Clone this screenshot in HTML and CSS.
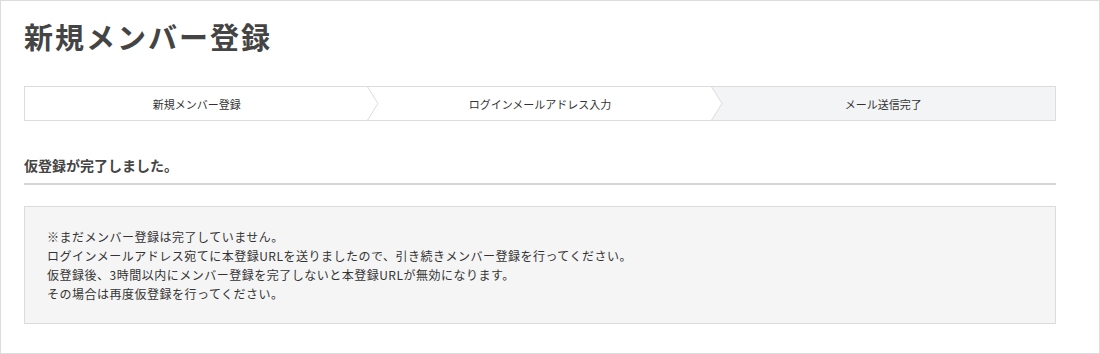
FILE: index.html
```html
<!DOCTYPE html>
<html lang="ja">
<head>
    <meta charset="UTF-8">
    <meta name="viewport" content="width=device-width, initial-scale=1.0">
    <title>新規メンバー登録</title>
    <link rel="stylesheet" href="styles.css">
</head>
<body>
    <div class="page">
        <h1 class="page-title">新規メンバー登録</h1>

        <ol class="steps">
            <li class="step">
                新規メンバー登録
                <svg class="step-arrow" width="12" height="35" viewBox="0 0 12 35">
                    <path d="M0 0 L11 17.5 L0 35" fill="#fff" stroke="#dcdcdc" stroke-width="1"/>
                </svg>
            </li>
            <li class="step">
                ログインメールアドレス入力
                <svg class="step-arrow" width="12" height="35" viewBox="0 0 12 35">
                    <path d="M0 0 L11 17.5 L0 35" fill="#fff" stroke="#dcdcdc" stroke-width="1"/>
                </svg>
            </li>
            <li class="step step-current">メール送信完了</li>
        </ol>

        <h2 class="section-title">仮登録が完了しました。</h2>

        <div class="notice">
            <p>※まだメンバー登録は完了していません。</p>
            <p>ログインメールアドレス宛てに本登録URLを送りましたので、引き続きメンバー登録を行ってください。</p>
            <p>仮登録後、3時間以内にメンバー登録を完了しないと本登録URLが無効になります。</p>
            <p>その場合は再度仮登録を行ってください。</p>
        </div>
    </div>
</body>
</html>
```

FILE: styles.css
```css
/* Reset */
* {
    margin: 0;
    padding: 0;
    box-sizing: border-box;
}

body {
    font-family: "Noto Sans CJK JP", "Noto Sans", sans-serif;
    color: #333;
    background-color: #fff;
}

/* Moldura da página */
.page {
    height: 354px;
    border: 1px solid #dcdcdc;
    padding: 15px 43px 0 23px;
}

.page-title {
    font-size: 29px;
    line-height: 40px;
    font-weight: bold;
    color: #444;
    letter-spacing: 2px;
    margin-bottom: 30px;
}

/* Etapas */
.steps {
    list-style: none;
    display: flex;
    height: 35px;
    border: 1px solid #dcdcdc;
}

.step {
    position: relative;
    flex: 1;
    display: flex;
    justify-content: center;
    align-items: center;
    font-size: 11px;
    color: #333;
    background-color: #fff;
}

.step-current {
    background-color: #f3f4f5;
}

.step-arrow {
    position: absolute;
    top: -1px;
    right: -11px;
    z-index: 1;
}

/* Título da seção */
.section-title {
    font-size: 14px;
    line-height: 20px;
    font-weight: bold;
    color: #444;
    margin-top: 34px;
    padding-bottom: 8px;
    border-bottom: 2px solid #d5d5d5;
}

/* Caixa de aviso */
.notice {
    margin-top: 21px;
    background-color: #f5f5f5;
    border: 1px solid #dcdcdc;
    padding: 20px 22px;
    font-size: 12px;
    line-height: 19px;
    letter-spacing: 0.5px;
    color: #333;
}
```
